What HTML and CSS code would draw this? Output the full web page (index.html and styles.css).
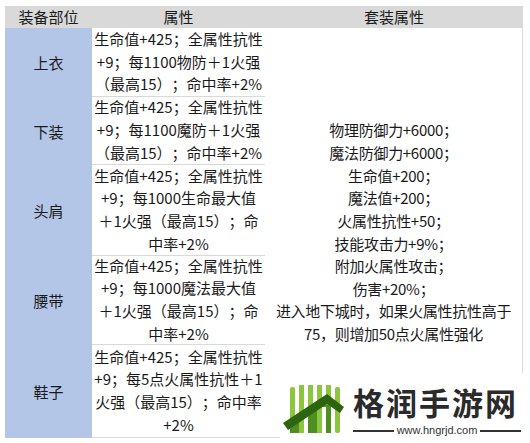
FILE: index.html
```html
<!DOCTYPE html>
<html lang="zh">
<head>
<meta charset="utf-8">
<link rel="stylesheet" href="styles.css">
</head>
<body>
<div class="table">
  <div class="hd">装备部位</div>
  <div class="hd">属性</div>
  <div class="hd">套装属性</div>

  <div class="part r1">上衣</div>
  <div class="attr r1"><span>生命值+425；全属性抗性</span><span>+9；每1100物防＋1火强</span><span>（最高15）；命中率+2%</span></div>

  <div class="set">
    <span>物理防御力+6000；</span>
    <span>魔法防御力+6000；</span>
    <span>生命值+200；</span>
    <span>魔法值+200；</span>
    <span>火属性抗性+50；</span>
    <span>技能攻击力+9%；</span>
    <span>附加火属性攻击；</span>
    <span>伤害+20%；</span>
    <span>进入地下城时，如果火属性抗性高于</span>
    <span>75，则增加50点火属性强化</span>
  </div>

  <div class="part">下装</div>
  <div class="attr"><span>生命值+425；全属性抗性</span><span>+9；每1100魔防＋1火强</span><span>（最高15）；命中率+2%</span></div>

  <div class="part">头肩</div>
  <div class="attr"><span>生命值+425；全属性抗性</span><span>+9；每1000生命最大值</span><span>＋1火强（最高15）；命</span><span>中率+2%</span></div>

  <div class="part">腰带</div>
  <div class="attr"><span>生命值+425；全属性抗性</span><span>+9；每1000魔法最大值</span><span>＋1火强（最高15）；命</span><span>中率+2%</span></div>

  <div class="part">鞋子</div>
  <div class="attr"><span>生命值+425；全属性抗性</span><span>+9；每5点火属性抗性＋1</span><span>火强（最高15）；命中率</span><span>+2%</span></div>
</div>

<div class="logo">
  <svg class="logo-icon" width="62" height="52" viewBox="0 0 62 52">
    <rect x="7" y="2" width="5" height="46" rx="2" fill="#8cc63f"/>
    <rect x="16" y="0" width="5" height="48" fill="#8cc63f"/>
    <rect x="25" y="0" width="5" height="48" fill="#8cc63f"/>
    <rect x="34" y="0" width="5" height="48" fill="#8cc63f"/>
    <rect x="43" y="0" width="5" height="48" fill="#8cc63f"/>
    <rect x="52" y="2" width="5" height="46" rx="2" fill="#8cc63f"/>
    <polygon points="7,48 16,48 16,30 25,30 25,48 34,48 34,22 43,22 43,48 48,48 48,20 36,20 12,36 7,40" fill="#4f8f22"/>
    <polygon points="0,38 44,9 61,22 57,28 44,19 5,45" fill="#2c6410"/>
  </svg>
  <div class="logo-text">
    <div class="logo-title">格润手游网</div>
    <div class="logo-url"><i></i><span>www.hngrjd.com</span><i></i></div>
  </div>
</div>
</body>
</html>
```
FILE: styles.css
```css
html, body {
  margin: 0;
  padding: 0;
  background: #ffffff;
}
body {
  width: 530px;
  height: 443px;
  overflow: hidden;
  position: relative;
  font-family: "Noto Sans CJK SC", "Noto Sans", sans-serif;
  font-size: 15px;
  color: #1a1a1a;
  text-spacing-trim: space-all;
}
.table {
  display: grid;
  grid-template-columns: 87px 173px 258px;
  grid-template-rows: 22px 69px 68px 91px 89px 93px;
  margin: 6px 0 0 5px;
  width: 518px;
}
.hd {
  background: #d9d9d9;
  display: flex;
  align-items: center;
  justify-content: center;
  line-height: 22px;
}
.part {
  background: #b4c6e7;
  display: flex;
  align-items: center;
  justify-content: center;
}
.attr {
  display: flex;
  flex-direction: column;
  align-items: center;
  justify-content: center;
  line-height: 22.7px;
  white-space: nowrap;
  border-bottom: 1px solid #d9d9d9;
  box-sizing: border-box;
}
.set {
  grid-column: 3;
  grid-row: 2 / 7;
  display: flex;
  flex-direction: column;
  align-items: center;
  justify-content: center;
  line-height: 22.65px;
  white-space: nowrap;
  border-right: 1px solid #dcdcdc;
  border-bottom: 1px solid #d9d9d9;
  box-sizing: border-box;
  letter-spacing: -0.3px;
}
.logo {
  position: absolute;
  left: 280px;
  top: 373px;
  width: 250px;
  height: 70px;
  background: #ffffff;
  display: flex;
  align-items: flex-start;
  padding: 12px 0 0 3px;
  box-sizing: border-box;
}
.logo-icon {
  display: block;
  flex: none;
}
.logo-text {
  margin-left: 8px;
  display: flex;
  flex-direction: column;
  width: 168px;
}
.logo-title {
  font-size: 31px;
  font-weight: 700;
  line-height: 34px;
  letter-spacing: 2px;
  color: #2a2a2a;
  white-space: nowrap;
}
.logo-url {
  display: flex;
  align-items: center;
  gap: 3px;
  margin-top: 5px;
  font-family: "Liberation Sans", "Noto Sans", sans-serif;
  font-size: 11px;
  line-height: 13px;
  color: #333333;
}
.logo-url i {
  flex: 1;
  height: 2px;
  background: #333333;
}
```
